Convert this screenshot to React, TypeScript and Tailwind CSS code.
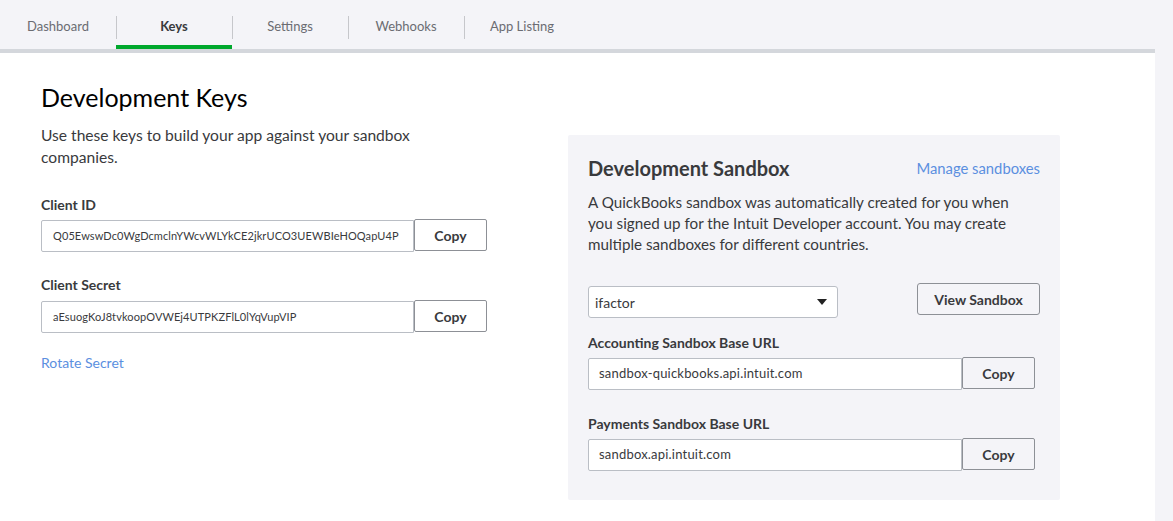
import React from "react";

const tabs = ["Dashboard", "Keys", "Settings", "Webhooks", "App Listing"];

function CopyField({ value, small, inputW, copyW }: { value: string; small?: boolean; inputW: string; copyW: string }) {
  return (
    <div className="flex items-start">
      <div
        className={`${inputW} h-[32px] mt-[1px] flex items-center bg-white border border-[#babec5] rounded-l-[2px] ${small ? "pl-[11px] text-[11px] tracking-[0.1px]" : "pl-[10px] text-[13px] tracking-[0.2px]"} text-[#393a3d]`}
      >
        {value}
      </div>
      <button
        className={`${copyW} h-[32px] border border-[#8d9096] rounded-[2px] bg-transparent text-[14px] font-bold text-[#393a3d] flex items-center justify-center`}
      >
        Copy
      </button>
    </div>
  );
}

export default function App() {
  return (
    <div
      className="w-[1173px] h-[521px] bg-[#f4f4f8] flex overflow-hidden"
      style={{ fontFamily: "Lato, 'Open Sans', sans-serif" }}
    >
      <div className="w-[1155px] flex flex-col bg-white">
        <nav className="h-[53px] bg-[#f4f4f8] border-b-[4px] border-[#d4d7dc] flex">
          {tabs.map((t, i) => (
            <div key={t} className="relative w-[116px] h-[49px] flex items-center justify-center">
              {i > 0 && <div className="absolute left-0 top-[16px] h-[23px] w-px bg-[#c6c7cb]" />}
              <span
                className={`text-[13px] mt-[5px] ${t === "Keys" ? "font-bold text-[#393a3d]" : "text-[#6b6c72]"}`}
              >
                {t}
              </span>
              {t === "Keys" && <div className="absolute left-0 right-0 bottom-0 h-[4px] bg-[#00a82d]" />}
            </div>
          ))}
        </nav>
        <div className="flex pl-[41px] pt-[27px]">
          <div className="w-[446px] flex flex-col">
            <h1 className="text-[25px] leading-[34px] text-[#000] font-normal">Development Keys</h1>
            <p className="mt-[10px] text-[15.6px] leading-[22px] text-[#393a3d] w-[400px]">
              Use these keys to build your app against your sandbox companies.
            </p>
            <div className="mt-[27px] text-[14px] font-bold text-[#393a3d] leading-[20px]">Client ID</div>
            <div className="mt-[4px]">
              <CopyField small value="Q05EwswDc0WgDcmclnYWcvWLYkCE2jkrUCO3UEWBIeHOQapU4P" inputW="w-[373px]" copyW="w-[73px]" />
            </div>
            <div className="mt-[23px] text-[14px] font-bold text-[#393a3d] leading-[20px]">Client Secret</div>
            <div className="mt-[5px]">
              <CopyField small value="aEsuogKoJ8tvkoopOVWEj4UTPKZFlL0lYqVupVIP" inputW="w-[373px]" copyW="w-[73px]" />
            </div>
            <a className="mt-[20px] text-[14px] text-[#5b8fe0] leading-[20px]">Rotate Secret</a>
          </div>
          <div className="ml-[81px] mt-[55px] w-[492px] h-[365px] bg-[#f4f4f8] rounded-[2px] px-[20px] pt-[20px]">
            <div className="flex items-center justify-between">
              <h2 className="text-[20px] font-bold text-[#393a3d] leading-[26px]">Development Sandbox</h2>
              <a className="text-[14.8px] text-[#5b8fe0]">Manage sandboxes</a>
            </div>
            <p className="mt-[11px] text-[15.2px] leading-[21px] text-[#393a3d] w-[445px]">
              A QuickBooks sandbox was automatically created for you when you signed up for the Intuit Developer account. You may create multiple sandboxes for different countries.
            </p>
            <div className="mt-[28px] flex items-start justify-between">
              <div className="mt-[3px] w-[250px] h-[32px] bg-white border border-[#babec5] rounded-[3px] flex items-center justify-between pl-[6px] pr-[10px] text-[14px] text-[#393a3d]">
                <span>ifactor</span>
                <svg width="10" height="6" viewBox="0 0 10 6"><path d="M0 0h10L5 6z" fill="#222" /></svg>
              </div>
              <button className="w-[123px] h-[32px] border border-[#8d9096] rounded-[3px] text-[14px] font-bold text-[#393a3d] flex items-center justify-center">
                View Sandbox
              </button>
            </div>
            <div className="mt-[15px] text-[14px] font-bold text-[#393a3d] leading-[20px]">Accounting Sandbox Base URL</div>
            <div className="mt-[4px]">
              <CopyField value="sandbox-quickbooks.api.intuit.com" inputW="w-[374px]" copyW="w-[73px]" />
            </div>
            <div className="mt-[24px] text-[14px] font-bold text-[#393a3d] leading-[20px]">Payments Sandbox Base URL</div>
            <div className="mt-[4px]">
              <CopyField value="sandbox.api.intuit.com" inputW="w-[374px]" copyW="w-[73px]" />
            </div>
          </div>
        </div>
      </div>
      <div className="flex-1 bg-[#f4f4f8]" />
    </div>
  );
}
